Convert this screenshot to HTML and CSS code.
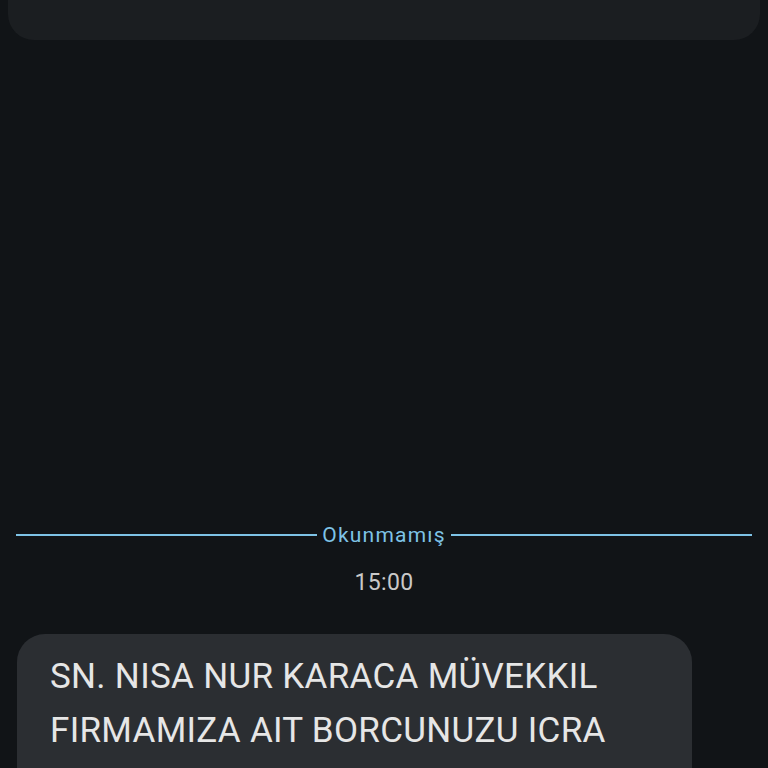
FILE: index.html
```html
<!DOCTYPE html>
<html lang="tr">
<head>
    <meta charset="UTF-8">
    <meta name="viewport" content="width=device-width, initial-scale=1.0">
    <title>Mesajlar</title>
    <link rel="stylesheet" href="styles.css">
</head>
<body>
    <div class="top-card"></div>
    <div class="spacer"></div>
    <div class="divider">
        <span class="line"></span>
        <span class="label">Okunmamış</span>
        <span class="line"></span>
    </div>
    <div class="time">15:00</div>
    <div class="bubble">
        <p>SN. NISA NUR KARACA MÜVEKKIL FIRMAMIZA AIT BORCUNUZU ICRA</p>
    </div>
</body>
</html>
```

FILE: styles.css
```css
html, body {
    margin: 0;
    padding: 0;
    height: 768px;
    overflow: hidden;
}
body {
    background: #111417;
    font-family: Roboto, "Noto Sans", sans-serif;
    color: #e6e6e6;
}
.top-card {
    height: 40px;
    margin: 0 8px;
    background: #1b1e21;
    border-radius: 0 0 26px 26px;
}
.spacer {
    height: 483px;
}
.divider {
    display: flex;
    align-items: center;
    gap: 5px;
    padding: 0 16px;
    height: 24px;
}
.divider .line {
    flex: 1;
    height: 2px;
    background: #7ec3e6;
}
.divider .label {
    color: #7ec3e6;
    font-size: 21px;
    letter-spacing: 1.2px;
}
.time {
    text-align: center;
    color: #c9c9c9;
    font-size: 23px;
    letter-spacing: 0.3px;
    margin-top: 22px;
}
.bubble {
    margin: 38px 0 0 17px;
    width: 675px;
    min-height: 200px;
    background: #2b2e32;
    border-radius: 28px;
    padding: 16px 30px 20px 33px;
    box-sizing: border-box;
}
.bubble p {
    margin: 0;
    font-size: 35px;
    line-height: 54px;
    letter-spacing: 0.3px;
}
```
